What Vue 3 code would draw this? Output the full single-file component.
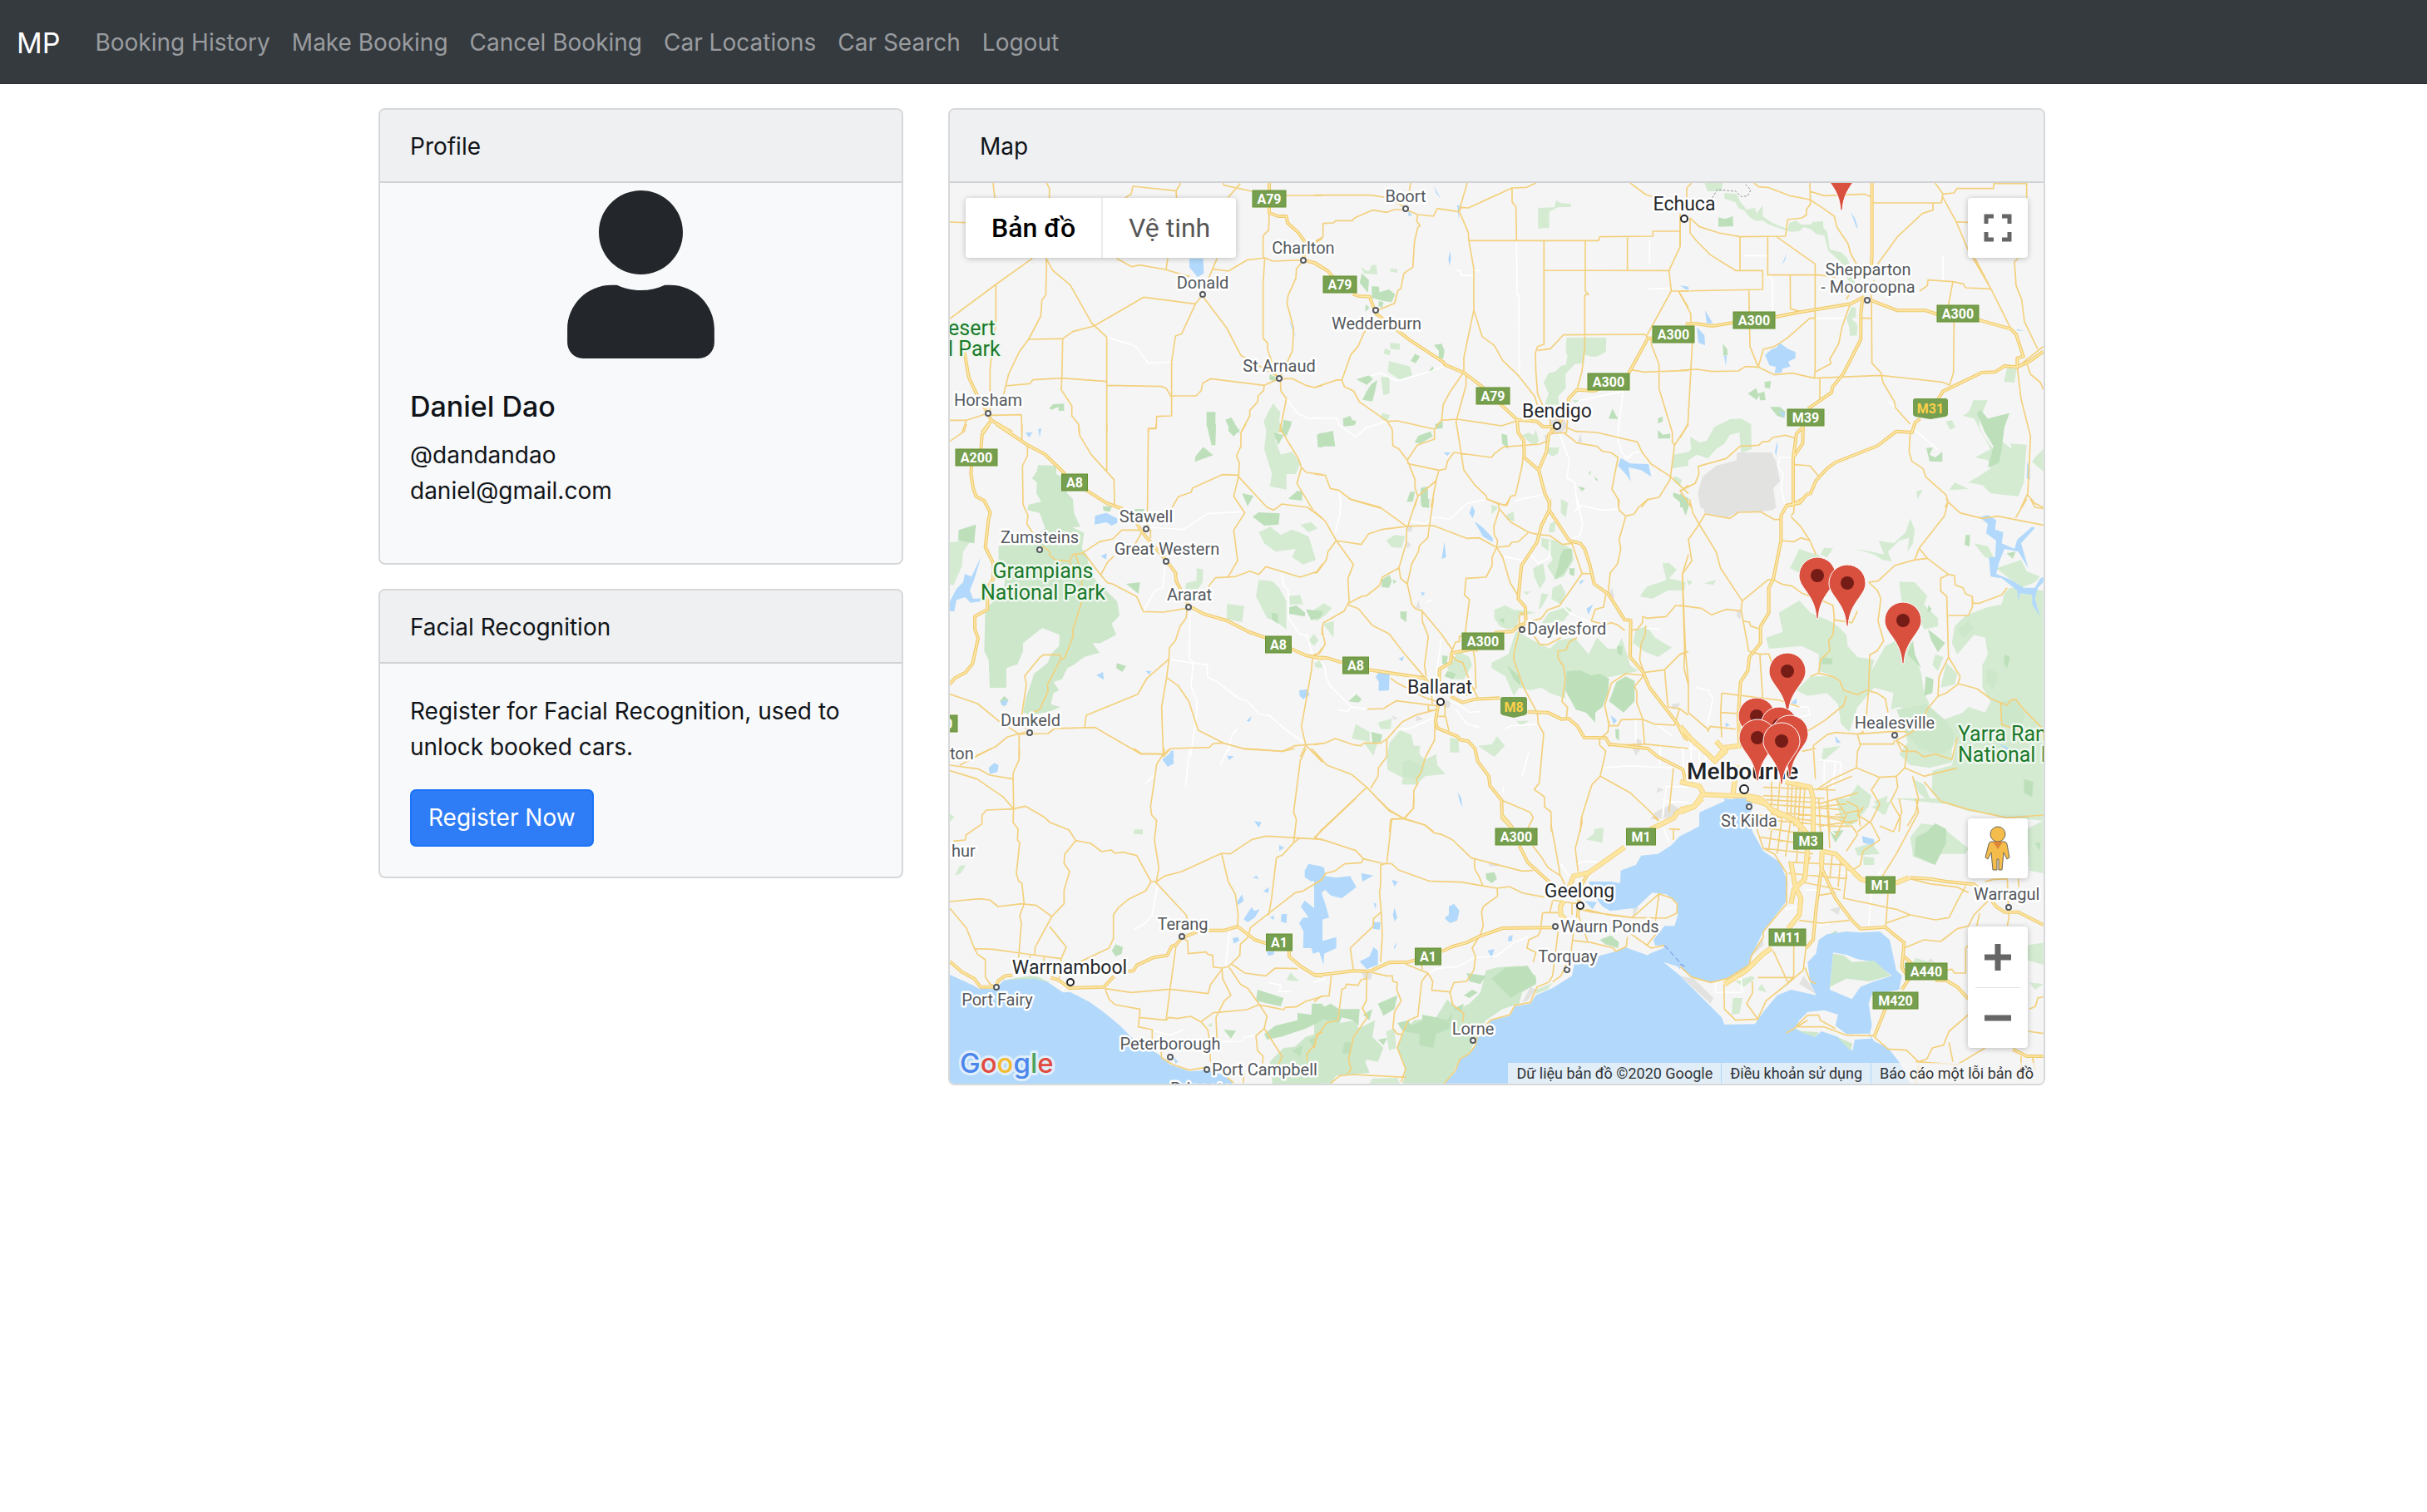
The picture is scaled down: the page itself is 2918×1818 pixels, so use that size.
<script setup>
const navLinks = ['Booking History', 'Make Booking', 'Cancel Booking', 'Car Locations', 'Car Search', 'Logout']

// The map is drawn from nine tiles. Each tile has its own origin on the map and
// holds its shapes at three times map scale; shapes are separated by "|".
const tiles = [
  {
    x: -12, y: -100,
    light: '1202,1094 1218,1116 1228,1126 1224,1160 1240,1200 1180,1200 1168,1160 1186,1124',
    dark: '395,1112 408,1098 448,1096 448,1122 428,1122 428,1108 402,1118|962,1126 994,1126 994,1200 976,1200 962,1176|1030,1154 1052,1146 1082,1200 1050,1200|1240,1154 1270,1160 1256,1200 1232,1200|1190,990 1222,1006 1206,1018 1188,1008',
    water: '900,572 950,572 952,626 930,640 900,604|356,1186 366,1190 360,1200 356,1200|1258,786 1272,820 1286,860 1268,820',
    white: '602,856 706,888 752,950 836,945|1250,1078 1290,1130 1330,1150 1380,1148',
    minor: '192,300 198,354|385,300 395,320 395,354|36,441 92,443|668,354 690,340 696,312 852,328 866,306 868,300|852,328 854,354|1022,300 1024,308 1126,330|1084,302 1040,352|1248,345 1380,345|36,790 202,666 334,572|202,666 202,800 196,850|186,930 181,970 181,1130|383,572 385,600 382,704 368,722 364,780 320,864 286,910 248,990 230,1062|383,572 408,616 470,668 548,806 602,856 602,1200|638,572 692,602 722,596 812,612 900,638|822,572 816,612|1000,572 984,610 948,690|984,610 1040,618 1108,578 1172,570 1200,582 1312,578|556,816 736,712 920,736|556,816 480,836 443,862 320,864|443,862 440,1006 438,1046 476,1104 476,1140 500,1170 504,1200|235,1032 324,1024 336,1010 438,1004 602,1016|602,1030 802,1034 816,1040 836,1074|946,706 922,736 872,844 850,852 836,945 836,1140 782,1142 780,1186 752,1186 752,1200|946,706 1034,822 1086,922 1222,1000|836,1068 924,1068 942,1050 948,1022 978,1006 1170,1030 1222,1006|1170,1030 1168,1048 1148,1068 1146,1090 1118,1120 1118,1140 1088,1196|1222,1006 1272,1006 1320,1030 1352,1038 1380,1030|1228,1010 1230,1050 1250,1078 1228,1185 1226,1200|1188,408 1186,470 1166,490 1166,570 1172,570 1166,660 1166,860 1182,878 1182,900 1216,1000|1312,578 1286,610 1284,644 1256,706 1252,734 1276,824 1272,904 1238,980 1222,1006|1348,520 1380,500|36,1156 96,1156 164,1134|96,1156 80,1200|180,1138 294,1136 296,1200',
    major: '1188,300 1188,408 1220,420 1250,420 1254,444 1290,476 1318,514 1312,578 1350,588 1380,606|80,860 92,930 104,1000 132,1060 172,1130 186,1156 260,1200|186,1156 152,1200',
  },
  {
    x: 438, y: -10,
    light: '808,120 866,118 874,92 888,102 928,106 926,116 878,118 848,134 848,192 808,194|910,588 1054,588 1052,640 1020,656 1000,656 976,650 974,680 940,684 906,720 908,770 880,800 884,830 830,832 846,790 828,750 846,716 870,710 890,690 908,686 914,652 908,640|274,606 310,610 308,632 274,628|270,672 346,692 354,724 310,740 266,710|750,940 774,930 790,940 800,920 810,960 800,972 780,970|840,984 884,984 880,1006 860,1016 840,1004|256,626 276,636 272,652 250,646|1296,1010 1350,1000 1350,1050 1292,1060|240,730 272,730 272,790 250,796|170,334 190,348 200,346 208,326 224,326 228,360 180,356|274,340 300,340 300,354 276,350|1300,1086 1326,1100 1320,1126 1298,1106|244,860 274,868 262,890 242,880|930,812 962,814 946,828',
    dark: '172,356 198,380 194,426 164,390|208,402 234,404 236,424 270,414 292,432 280,460 250,456 208,444|432,614 460,610 470,634 466,664 448,664 450,636|364,646 382,656 366,680 348,672|152,738 200,724 212,738 190,758|206,756 228,740 220,780 210,818 174,812 190,780|104,880 130,870 138,886 152,888 146,904 106,908|12,936 68,924 76,980 40,980 14,984|376,942 420,926 428,944 384,970 362,966|436,900 464,890 464,914 440,918|676,934 696,940 700,990 678,970|1062,880 1076,844 1096,882|1240,880 1256,872 1258,890 1240,898 1240,920 1258,938 1284,934 1284,952 1240,952|384,1130 410,1124 412,1200 390,1200 384,1160|346,1144 364,1144 356,1180 334,1180|428,690 432,710 410,714|990,1076 998,1066 996,1084|952,1124 978,1130 966,1142|1296,1146 1350,1166 1350,1200 1330,1190 1294,1160|234,456 250,460 246,480 232,474|186,468 200,480 184,494|1012,1088 1026,1104 1014,1102',
    gray: '850,884 900,880 914,910 890,934 860,930|962,934 966,966 950,966|830,940 850,936 836,980',
    water: '1106,1022 1140,1042 1206,1044 1216,1090 1180,1066 1134,1056 1142,1106 1124,1080 1096,1050|466,1002 492,1002 480,1014|516,110 524,110 522,164|340,130 354,146 340,150|490,276 494,300 488,330 484,304|432,40 456,86 440,66|1320,400 1350,404 1350,416',
    white: '730,240 732,434 738,434 740,720|514,346 528,346 530,364 578,364|576,346 600,346|0,878 84,878 90,904 150,946 186,914 260,890|884,930 920,1028 912,1094 940,1110 950,1200|916,850 960,814 1114,782 1094,950 1108,1000|200,726 240,716 300,744 420,710 470,690|1210,236 1210,320|1204,412 1286,410|90,1140 96,1200|724,1176 826,1154|1108,1000 1130,1024 1150,1004 1180,998',
    minor: '0,74 205,74 270,84 330,120|348,30 342,64|6,240 32,224 32,176 70,174 78,166 138,166 146,156 210,128 262,136 290,126 330,126 374,144 430,150 444,122 522,134 552,30|374,144 370,168 382,184 374,190 362,240 356,334 324,356 312,412 302,418 290,464 222,492|522,134 530,118 556,120 714,48 766,46 800,30|524,134 556,208 558,238 576,340 576,488 540,660 540,712|558,238 1026,238 1030,224 1222,222 1222,204 1320,204|714,48 714,98 728,116 730,238|829,238 829,612 806,620 798,644 800,714 806,790 824,832|829,345 1280,346|978,238 978,420 990,432 976,434 976,620 966,710 948,776|1130,224 1130,345|1140,30 1196,72 1260,90|1320,140 1320,260 1280,346 1288,420 1200,580|1288,420 1350,420|1314,420 1350,480|806,634 852,628 890,588 898,578 1192,576 1204,588|576,488 606,584 650,616 680,670 736,724 796,800 806,834|210,530 180,570 158,620 132,650 100,742 110,766 142,780 164,820 264,890 282,920 284,978 306,990 336,1030 364,1100 364,1130 374,1160 362,1200|0,768 84,740 100,742|264,890 300,888 434,918 434,954 372,976 336,1030|540,712 490,784 466,828 460,884 434,918|548,720 548,760 512,890 540,1066 580,1120 622,1160 622,1170 690,1194 710,1160 726,1156 750,1050 756,1000|460,886 516,882 676,906 732,888|336,1042 450,1066 474,1062 482,1032 504,1002 640,1020 650,1006 684,982 814,972 850,956|450,1066 440,1104 374,1160|440,1104 422,1200|0,1080 40,1084 58,1132 88,1138 130,1170 240,1200|906,910 944,926 1020,930 1166,964 1182,1000 1216,1044 1284,1088 1350,1150|900,930 948,968 1020,980 1040,998 1070,1002 1096,1020 1074,1134 1100,1176 1098,1200|1216,590 1216,612 1244,684 1244,772 1292,930 1292,964 1300,976 1284,1100 1244,1164 1204,1172 1180,1200|1144,704 1190,712 1350,706|1300,976 1350,900|1324,1140 1350,1120|850,880 914,880 910,930 856,934 850,880',
    major: '0,316 50,348 68,370|140,430 160,438 200,440 222,500 344,596 466,676 472,686 540,714 600,760 732,884 804,890 826,910 876,908|732,884 736,930 756,960 758,1020 810,1066 832,1150 850,1186 848,1200|810,1066 838,1000 846,938 876,908 916,850 918,808 948,776 1010,780 1030,772|1134,718 1204,590 1226,590',
  },
  {
    x: 878, y: -100,
    light: '88,300 154,300 150,330 100,330|160,336 204,340 216,366 240,396 270,390 276,410 298,380 298,420 326,440 360,456 388,466 394,444 418,436 436,450 470,450 480,440 516,438 516,460 530,476 540,540 580,550 600,568 616,600 640,700 600,640 580,586 534,544 520,490 490,484 470,466 446,460 430,474 400,476 380,470 320,450 300,436 270,436 248,420 232,400 210,390 200,370 160,356|618,746 634,750 634,784 618,790 640,810 638,850 612,852 610,820 600,790|1058,1084 1110,1084 1080,1150 1080,1180 1100,1220 1130,1260 1160,1230 1196,1260 1192,1240 1250,1244 1240,1380 1220,1430 1120,1420 1090,1390 1040,1380 1080,1356 1120,1330 1110,1300 1064,1290 1120,1260 1060,1150 1020,1140 1042,1124|958,1160 980,1156 994,1180 974,1190|990,1380 1040,1404 970,1408|1280,1290 1310,1260 1310,1340 1270,1306|852,1412 876,1406 856,1440|1180,964 1214,968 1206,1020 1168,1018|36,1216 70,1236 96,1230 124,1180 180,1152 220,1150 256,1170 258,1260 220,1274 214,1200 180,1208 160,1240 130,1260 100,1294 60,1280 0,1320 0,1300 40,1260',
    dark: '138,424 162,430 190,420 192,456 138,458|244,1060 274,1040 282,1060 304,1052 308,1084 288,1084 286,1066 276,1082|304,1018 328,1014 324,1042 306,1038|324,1108 360,1108 380,1124 376,1148 350,1140|154,880 170,900 172,922 156,922|1070,1130 1084,1118 1110,1150 1188,1130 1170,1180 1160,1260 1150,1310 1110,1326 1130,1250 1100,1200|888,1256 912,1254 900,1280 920,1290 946,1270 946,1306 900,1304|0,1420 30,1444 30,1470 0,1470',
    gray: '204,1272 330,1272 348,1310 360,1376 336,1400 346,1474 74,1474 64,1420 80,1360 130,1320 204,1300',
    water: '306,920 330,900 348,894 358,876 388,898 416,910 416,932 390,944 398,962 370,970 366,984 340,986 346,964 322,958|60,820 88,850 90,886 66,876|90,760 118,806 96,806|356,1120 378,1130 374,1148|0,670 34,684 20,684|616,404 632,430 642,466 634,456|384,552 378,580 368,594|350,1232 352,1250 346,1284 342,1270|1252,1304 1262,1330 1262,1370 1250,1366|158,922 168,924 165,960|1210,828 1240,832 1220,834',
    white: '230,562 316,562|316,630 334,650 334,770|490,788 594,788|948,562 948,650|408,1290 360,1290 352,1320 372,1350 364,1400 378,1460|750,1086 776,1110|836,1180 880,1220 930,1262',
    dashed: '116,354 134,324 200,330 222,350 244,346 255,325 235,304',
    minor: '42,300 24,318 24,360|0,420 0,530|36,426 36,480 60,510 110,560 200,616 298,616 298,684 0,690|36,426 70,458 140,480 216,494 380,492 388,432 440,426 456,414 456,396 470,376 468,300|266,300 284,314 316,316 396,346 468,360 520,394 556,420 566,460 606,520 614,552 640,600 660,650|468,330 520,346 664,340 690,350|696,372 942,372 948,340 920,300|912,374 912,398 874,410 784,494 700,610|948,340 988,336 998,320 1130,320 1132,302 1250,302 1250,354|948,352 996,440 1038,540 1120,680 1190,820|996,440 1038,442|1064,572 1120,680|1220,572 1206,584 1212,670 1232,720 1242,800 1290,900|216,494 216,616|316,494 316,632 500,632 560,640|348,494 487,592 487,980 484,1004|397,634 398,754 430,762|690,690 692,950 724,984 732,1020 774,1090 776,1110 830,1170|864,690 892,670 894,650 984,656 1022,664 1030,678 1120,682|984,656 968,740|988,800 986,984 972,1030|0,700 38,770 44,880 28,1170 0,1220|248,686 252,890 282,964|0,976 60,972 116,980 210,978 236,962 282,964 340,992 404,986 484,1004 724,994 944,1018 974,1030|282,964 300,900 340,890 386,860 468,788 486,788|612,740 584,820 572,880 540,936 544,952 490,980|504,1004 504,1080|655,788 690,788|412,1220 380,1210 334,1218 320,1232 296,1234 284,1246 216,1250 166,1294 66,1322 68,1350 54,1384 0,1410 20,1440 40,1470|412,1316 468,1320 500,1358|830,1200 826,1270 836,1304 876,1330 886,1360 960,1426 966,1450 956,1470|1216,964 1230,1080 1264,1214 1254,1420 1230,1470|1254,1426 1280,1456 1310,1470|1216,964 1310,890|1250,950 1264,990 1300,1020 1310,1044|700,650 690,690|616,690 600,720',
    major: '692,300 692,560 690,600|20,808 60,808 116,816 192,804|342,784 420,768 616,736 664,710|690,724 784,760 886,760 930,774|1076,794 1192,826 1212,846 1238,926 1216,932 1216,964|1310,908 1260,944 1216,964 1170,960 1136,982 1088,984 948,1052 930,1080|866,1150 848,1164 836,1200 780,1196 712,1248 560,1308 530,1330 490,1374 470,1420 456,1424 432,1454 380,1464|658,720 652,770 652,864 590,986 550,1036 546,1056 462,1114|444,1178 442,1240 408,1290 408,1470|444,1180 420,1204 408,1290',
  },
  {
    x: -12, y: 290,
    park: '354,148 420,150 420,180 440,190 460,250 480,270 484,320 506,370 478,372 520,392 512,450 530,470 540,530 560,560 600,600 640,640 648,690 620,720 636,760 580,790 550,790 576,824 520,840 480,870 460,880 440,920 410,930 430,960 410,970 400,1010 434,1020 400,1036 330,1050 300,1040 310,990 340,900 390,860 400,830 430,800 432,760 370,736 350,750 300,790 300,820 280,866 240,880 240,950 180,952 176,850 160,820 164,670 230,600 240,520 212,500 212,440 330,410 380,376 360,320 316,310 320,290 366,280 348,250 350,210 332,196 350,170',
    light: '1180,0 1228,0 1210,60 1230,110 1270,100 1300,140 1284,180 1250,180 1250,236 1190,224 1198,180 1170,90|36,426 112,420 84,460 80,510 50,580 36,580|1150,390 1192,370 1230,400 1270,380 1330,404 1356,490 1310,506 1270,480 1284,450 1210,460 1170,430|1150,562 1200,566 1224,590 1250,640 1250,740 1210,710 1180,700 1140,620|1036,648 1098,656 1090,714 1034,704|926,520 950,524 948,570 930,596 886,594 888,574 926,564|1260,620 1300,616 1310,650 1262,650|1300,362 1340,354 1362,376 1330,390|1330,780 1350,756 1366,780 1350,800|1350,874 1366,852 1380,860 1380,880',
    dark: '68,382 130,362 124,430 66,420|922,116 950,82 986,112 920,136|1090,250 1132,258 1110,296|1128,334 1150,318 1226,322 1222,362 1170,366|1256,270 1290,240 1308,244 1306,276|962,0 996,0 994,76 980,76|1044,0 1082,20 1060,44 1040,24|1204,30 1240,40 1220,76|1240,0 1268,0 1250,44 1232,30|672,576 722,570 716,612|1196,680 1220,684 1220,720 1198,706|1260,660 1286,654 1318,680 1316,694 1260,684|1320,668 1380,674 1380,690 1340,708|638,862 672,872 658,894 636,880|588,296 620,296 614,316 590,312|702,306 738,306 736,316 704,316|1360,40 1380,30 1380,84 1364,80|216,1000 232,980 248,996 232,1020',
    water: '36,640 60,594 84,570 90,540 114,550 148,480 124,560 108,600 120,630 148,628 146,640 110,644 92,624 60,634 52,676 36,674|560,330 600,320 640,340 640,356 620,366 600,354 558,362|308,30 334,30 322,48|580,476 602,466 600,488|564,906 588,894 592,922|1296,960 1324,956 1334,976 1310,992 1298,980|220,1000 246,994 240,1014 222,1014|356,20 366,14 360,50|1106,1070 1124,1054 1118,1074|742,890 762,890 756,904|832,1180 842,1176 844,1200 828,1200',
    white: '750,372 878,380 934,344 968,322 1090,316|812,510 804,590 776,600 734,676|902,680 900,846 914,860 906,944 928,1000 926,1050 904,1200|832,850 964,868 966,912 1000,930 1080,990 1110,1000 1150,1044 1190,1052 1250,1104 1310,1146|1232,540 1240,580 1256,600 1258,700 1296,756 1326,764 1344,836|1072,1100 1054,1120 1040,1180',
    minor: '96,0 88,26 36,62|296,0 296,60 316,76 316,114 298,150 300,290 318,330 314,360 340,400|500,0 504,40 546,110 628,200 630,290|602,0 602,168|782,0 780,14 752,16 748,380|1104,0 1086,30 1086,80 1070,114 1080,140 1078,186 1060,260 1100,320 1060,382 1074,492 1040,550|1078,184 1018,182 912,230 906,246 860,262 838,300|1078,190 1180,300 1204,310 1234,288 1326,300 1380,340|1228,0 1230,20 1294,126 1304,156 1288,214 1346,310|1304,156 1322,174 1380,182|512,466 576,424 624,414 656,382 730,382|748,380 760,382 760,412|726,394 700,440|512,466 524,470 580,544 604,572 622,576 710,622 734,676 808,678 890,664|628,476 606,496 580,544|370,440 394,458 398,474 418,490 468,494 480,470 512,466|468,494 484,530 500,560|490,470 512,540 512,640 480,740 480,766 450,844 434,850 388,940 390,964 360,1030 336,1040|434,832 374,832 362,840 306,908 312,940 296,1046 312,1100|434,832 436,850|968,586 994,554 1066,550 1118,530 1150,542 1176,514 1300,552 1360,532 1380,504|892,668 888,700 866,730 850,780 828,806 826,850 818,914 800,1020 806,1200|826,848 746,918 714,974 528,1050 522,1096|818,914 860,944 898,1000 932,1104 1022,1150 1100,1172 1236,1180 1280,1160 1380,1152|36,974 136,1008 214,1072 286,1118 390,1116 414,1098 560,1094 726,1190 806,1190|310,1110 244,1128 200,1164 130,1196|286,1118 286,1200|806,1200 832,1170 972,1166 986,1152 1022,1150|1344,846 1340,890 1324,980 1304,1090 1320,1158 1300,1200|1320,1158 1380,1220|1344,836 1366,826 1380,806|1380,730 1378,760',
    major: '204,0 314,74 378,108 452,180|528,238 600,284 660,306 710,356 730,390 820,496 850,536 852,564 898,656 956,686 1034,708 1116,750 1180,772|1266,810 1320,834 1380,846|178,0 152,38 148,94|114,150 112,178 120,230 130,260 160,276 182,320 176,340 164,444 192,500 192,560 172,590 172,668 126,694 126,740 138,772 118,864 92,896 54,916 36,938',
  },
  {
    x: 438, y: 380,
    park: '320,950 350,940 400,970 380,1010 316,1000',
    light: '640,590 700,560 728,476 790,510 850,540 880,510 940,500 990,560 1020,500 1060,540 1090,540 1110,500 1140,600 1170,620 1080,640 1000,650 930,620 910,620 906,720 850,700 820,680 780,690 740,680 720,710 690,640 640,610|650,400 690,384 720,400 770,404 800,410 740,420 730,460 700,470 670,460 650,430|846,410 910,390 930,400 900,440 820,450|820,340 846,344 820,390 810,400|860,320 890,306 908,340 890,380 856,360|790,250 826,232 836,290 814,324 794,280|820,140 870,150 900,164 930,180 936,220 900,280 870,290 840,240 860,220 850,190 820,170|1160,470 1200,460 1230,500 1290,536 1240,570 1190,550 1150,520|1174,352 1200,316 1260,296 1270,290 1256,232 1280,230 1308,256 1280,286 1340,300 1336,330 1276,330 1220,360|272,880 310,834 350,850 360,890 382,890 380,920 400,940 440,920 444,960 474,992 400,1000 370,1030 316,1030 320,1006 264,976 262,930|150,812 200,840 200,876 136,864|180,880 230,876 214,926|230,806 280,792 276,830 240,830|590,890 640,886 660,856 688,890 650,930|490,860 520,866 524,914 490,914|520,550 560,570 570,600 540,650 500,650 480,610|260,150 290,130 328,134 316,176 280,174|850,90 870,80 868,120 846,120|890,0 916,14 908,66 890,50|690,60 720,44 722,80 696,76|640,20 664,30 640,56|0,400 36,376 64,394 40,420 10,440 0,436|32,450 72,440 70,500|730,800 776,800 744,818|0,590 32,590 12,612|754,334 782,334 766,346',
    dark: '910,620 960,618 1000,636 1030,630 1064,648 1060,700 1040,750 1014,770 1014,806 980,770 944,760 906,690|1090,660 1124,640 1156,656 1156,730 1116,770 1064,730|886,210 900,180 930,180 930,220 900,270 866,290 880,240|920,250 940,250 938,278 922,272|244,290 272,274 280,296 270,320 244,318|310,406 334,406 332,444 312,430|696,600 740,640 746,676 720,650|206,840 246,850 240,876 210,880|124,730 152,704 172,722 160,734|384,0 416,0 414,34 386,24|462,564 482,566 478,600 462,594|480,620 512,630 500,650 470,640|1086,830 1100,830 1100,872 1088,862|284,290 298,298 286,306|666,436 686,430 684,450|0,410 30,410 20,430 0,430|1092,530 1112,530 1110,566 1094,556',
    gray: '336,90 356,100 350,120 336,116|334,150 350,166 334,180|376,366 384,396 366,394|1074,320 1084,356 1060,350|1160,864 1180,870 1180,900 1160,926 1150,900|280,780 302,792 286,796|370,780 394,794 366,802|466,724 494,730 488,752 470,756|1290,740 1320,736 1310,760 1290,756|1240,1040 1262,1050 1234,1060|1230,1130 1290,1100 1320,1120 1280,1150 1212,1156',
    water: '560,50 570,24 580,44 572,70|578,80 610,104 644,140 644,156 608,134|470,154 476,210 460,216|222,642 232,626 272,630 270,690 232,692 234,660|958,296 976,290 960,310|982,396 1006,380 990,418|384,336 400,338 392,350|304,576 324,568 318,586|518,1058 530,1076 536,1112 524,1090|1070,780 1092,798 1080,814',
    white: '96,0 92,60 76,120|0,576 20,580 40,610 42,640 60,676 134,750 120,766 84,760|134,750 190,758|430,66 490,72 550,16 624,0|322,98 350,80 400,90 430,66|458,506 430,720|490,730 520,740 560,770 600,766|510,760 550,810 596,824|296,832 350,826 430,790|688,828 710,818 806,812|936,46 964,24 1040,40 1096,36|950,0 968,90 960,130 930,144|684,208 760,222|780,200 810,232 850,210 850,150|900,390 920,410 1000,446|1038,970 1140,962 1204,966 1340,970|1160,796 1160,890|1250,886 1246,960|774,916 750,1000|1240,816 1290,854|1196,466 1246,470|1256,1150 1270,1036 1350,1040|1260,1090 1350,1094|400,376 428,362|684,1036 680,1060|1330,900 1334,980',
    minor: '0,44 40,80 80,150 142,236 122,286 126,370 120,382 108,404 34,446 28,470 40,524 20,556 0,562|80,150 170,164 196,126 244,110 340,98 430,96 550,142 596,140 624,156 658,174 702,170 714,156 736,154 774,120 806,128 850,132 896,164 930,160|80,150 50,190 44,220 10,266 0,266|126,0 244,34 332,98|370,0 350,60 334,110 332,160 306,248 312,286 336,306 352,380 366,396 390,404 458,486 500,546|430,0 416,96 410,140 380,168 376,190 352,234 336,306|306,248 246,282 236,312 190,348 170,352 120,378|120,380 160,396 210,456 270,486 324,556 404,650|390,404 390,440 412,496 398,600 404,640|624,0 664,18 696,22 704,0|664,18 668,36 648,100 650,130 662,150 658,174 642,210 642,240 620,282 548,286 542,346 560,362 544,490|668,36 710,84 774,120|658,174 680,210 706,300 736,350|930,160 966,268 996,270|966,270 884,386 842,400 820,430 768,446|1096,0 1100,40 1124,62 1100,146 1106,180 1094,234 1068,266 1060,340|1124,62 1154,54 1170,30 1204,0|1052,344 1044,390 1014,398 1000,440 1050,454 1070,446 1094,454 1120,474|1140,474 1166,470 1184,446 1186,424 1200,430 1270,424 1304,384 1350,388|1196,456 1194,490 1180,520 1174,580 1190,626|1350,200 1328,272 1336,540 1334,610 1350,672|1350,550 1320,560 1264,616 1190,626|1264,616 1276,750|790,490 814,524 842,526 890,500|948,500 920,516 908,546 880,548 880,574 900,604 906,650 894,730 914,752 910,790|744,460 720,560 720,580 756,680 802,766 806,780 808,810 828,846 812,1024 794,1048 830,1074 832,1112 854,1128 856,1200|496,550 510,516 524,514 524,496 546,490|500,568 516,584 536,590 562,660 590,716|574,548 580,580 584,680 548,710|192,758 250,756 296,728 410,742 448,746|276,646 300,664 400,716 440,730|0,886 40,880 76,864 140,886 168,890 180,880 240,880 262,866 318,804 370,778 440,760|262,866 262,930 232,970 230,1000 204,1044|436,800 434,870 402,930 384,990 368,1010 374,1026 360,1050 358,1116 324,1152 272,1126 190,1040 136,994 46,960 0,910|190,1040 20,1200|272,1200 276,1156 324,1152 400,1176 430,1200|448,784 472,784 472,740|474,784 486,836|412,740 412,762 440,762|424,700 426,740|676,1086 780,1130 790,1150 770,1190|1064,800 1060,840 1030,866 1030,888 1052,910 1032,1000 1002,1030 964,1150 960,1200|1032,1000 1140,1060 1200,1116 1244,1160|1190,636 1156,676 1164,694 1164,736 1184,790 1192,884|1190,636 1124,630 1072,664 1048,744 1064,818 1096,818 1108,796 1184,794 1228,812 1300,816 1318,756 1276,750|1318,756 1350,780|1060,890 1192,884 1350,900|1296,970 1280,1130|740,410 760,414 740,420 740,450',
    major: '848,0 848,40 820,96 804,156 748,240 736,360 762,390 764,448 740,456 714,478 650,482|848,40 920,150 960,160 976,180 994,236 1010,306 1062,344 1120,436 1142,438 1140,570 1186,624 1210,680 1310,810 1336,860 1350,870|590,548 580,540 496,556 492,590 452,614 450,700|0,570 50,574 100,590|196,616 398,646 440,700|492,712 536,734 580,722 670,718|770,768 842,770 892,794 918,792 950,820 974,860 1052,862 1064,884 1204,900 1240,930 1330,976 1340,1020 1350,1026|448,740 438,800 444,826 516,856 526,868 556,874 580,900 590,946 630,1000 634,1034 676,1086 678,1150 716,1190',
    wide: '1212,1192 1270,1164 1298,1150 1310,1130 1350,1112',
  },
  {
    x: 878, y: 380,
    light: '430,180 470,194 500,200 520,250 440,270 396,250|520,176 552,178 530,210 506,200|830,70 846,110 840,160 820,190 826,140 790,150 750,190 764,226 730,220 700,200 630,180 690,190 736,200 716,150 770,160 814,120|310,500 370,480 356,410 430,366 470,410 540,440 570,460 600,490 604,530 640,570 700,580 690,620 740,530 800,500 840,520 850,570 870,630 880,700 900,740 870,780 790,750 760,760 770,700 700,680 640,750 610,840 580,810 570,740 530,700 460,710 420,690 470,640 560,640 500,620 500,560 440,530 320,540|790,298 846,300 892,350 880,380 930,430 930,460 880,470 860,430 800,380|1110,390 1160,380 1170,340 1190,320 1310,330 1310,1150 1040,1120 940,1090 908,1060 910,980 980,960 1000,870 960,830 940,800 1020,770 1040,750 1100,770 1120,730 1090,680 1090,600 1110,560 1100,500 1060,490 1000,560 980,520 990,460 1030,420|960,590 1000,630 990,670 940,680|800,780 900,760 960,830 1000,860 980,900 980,950 900,970 830,960 790,920 820,880|1140,250 1230,220 1250,260 1298,280 1280,300 1230,320|1060,160 1110,170 1136,220 1100,210|594,1100 640,1030 690,1070 680,1110 630,1170 600,1180 570,1150|516,900 580,890 510,950|700,1090 750,1070 730,1140|840,1010 880,1030 910,1100 860,1060|920,560 950,570 930,620 910,600|24,290 46,300 30,312|86,304 130,292 120,310',
    park: '780,760 890,740 960,800 990,850 980,900 940,920 860,900 820,850|1160,730 1210,720 1244,780 1230,830 1160,814|1000,470 1040,440 1060,470 1020,500|1110,610 1150,630 1130,690 1100,660',
    dark: '894,470 920,490 956,520 930,552 906,510|886,640 914,650 910,700 880,710|514,570 550,576 548,596 508,596|896,382 908,398 892,410|820,560 840,510 846,560 870,610|1030,130 1046,130 1044,170 1026,166|1178,196 1210,190 1200,216|1240,1010 1274,1020 1270,1076 1240,1060|0,0 26,0 30,30 20,60 10,34|1170,560 1190,570 1180,610 1168,596',
    gray: '74,0 344,0 336,40 290,46 210,46 170,68 90,54|206,400 220,404 218,434 204,424',
    water: '1080,66 1110,58 1140,76 1136,110 1166,120 1160,160 1206,180 1216,146 1270,100 1280,104 1230,160 1256,250 1220,190 1170,180 1150,230 1140,270 1190,290 1240,320 1280,320 1296,290 1310,280 1310,300 1290,320 1280,360 1298,424 1270,380 1270,346 1226,340 1220,370 1216,330 1160,286 1120,280 1114,210 1136,210 1140,150 1104,124 1110,90|558,854 580,880 564,880|400,736 420,720 420,740|164,806 180,816 164,822|1146,880 1190,900 1180,906|68,1204 70,1140 120,1110 170,1116 158,1080 200,1086 240,1110 262,1204',
    white: '56,680 100,690 118,720 100,810|400,750 460,750 470,780 400,790|0,900 70,900 70,1000|40,880 40,980|90,920 100,1000|500,940 580,950 580,1020|520,940 520,1040|560,950 550,1040',
    minor: '34,0 46,50 68,90 130,190 146,250 224,368 220,400 248,550|68,92 30,146 42,224 8,270 20,560 30,660 30,770|68,92 90,54 180,70 210,48 290,46 340,74 364,74|400,60 410,50 412,0|400,64 436,100 468,150 490,200|364,150 410,154 436,140 468,150|224,368 316,292 334,290 370,308 404,314 440,340 520,370 552,384 556,430 552,490 536,510 540,548 506,580 500,628 470,640|0,384 76,394 114,418 166,398 222,404|0,560 20,552|224,440 250,444 254,458 284,468|250,550 288,560 320,558 330,590|288,560 290,600 298,720|556,436 620,446 640,404|680,300 714,296 774,240 844,220 892,214 968,272 990,276 992,310 1020,320 1030,342 1054,352 1056,376 1080,376 1160,346 1180,320|680,300 712,330 724,360 714,440 734,512 710,548 684,562 680,690 672,780|1250,0 1210,68|862,178 954,60 966,10 1010,50 1090,70 1146,62 1310,94|966,10 960,0|862,178 846,220|862,178 892,214|1264,0 1280,30 1310,34|968,272 940,286 940,332 962,352 968,570 934,640 930,710|968,420 1040,420 1054,390 1054,352|968,570 1010,640 1002,668 960,700 930,712|1002,666 1070,684 1120,720 1180,744 1190,728 1210,722 1240,760 1310,830|1156,736 1160,814 1220,832 1240,880 1310,850|930,712 890,760 870,820 820,850 780,870|500,628 550,640 576,656 590,690 640,706 672,690 710,700 740,720 750,770|600,710 590,744 520,800 440,850|672,780 660,840 640,850|480,890 530,850 560,842 640,848 770,838 820,840|640,850 650,888 640,910 636,970|650,884 770,884 774,870|780,870 800,910 850,910 880,930 920,920 980,940 1000,860|780,870 820,900 810,970 780,1000 720,1004 636,970|780,1000 785,1040 760,1090 795,1150 790,1200|810,970 880,1000 1000,970|720,1004 690,1050 720,1100 690,1160 640,1200|838,1000 860,1080 850,1130 820,1180|636,970 550,1010 490,1050|880,1020 940,1090 1040,1120 1180,1150 1310,1140|100,840 108,820 200,830|150,700 146,780 150,860|150,700 360,726 430,750|146,770 240,776|30,770 104,834|490,900 440,910|480,890 488,1010|300,1040 560,1050|300,1070 520,1080|300,1100 580,1120|330,1130 600,1150|340,1160 520,1176|330,1020 330,1140|360,1020 350,1150|390,1020 385,1160|420,1030 410,1180|450,1040 440,1200|500,1050 620,1000|500,1100 640,1060|500,1180 640,1160|530,1040 540,1200|600,1090 640,1110 650,1180|405,1020 398,1160|435,1030 425,1180|310,1085 500,1095',
    major: '442,0 410,18 384,24 364,60 364,150 336,290 320,320 320,410 290,460 290,520 250,570 244,620 218,660 210,780 214,900',
    wide: '0,820 40,866 100,920 130,950|130,874 164,910 120,950|120,950 164,896 215,890|0,1020 70,1036 86,1066 180,1070 240,1070 290,1080 330,1120 400,1150 450,1200|0,1120 50,1110 80,1066|190,1070 204,960|380,1020 470,1040 480,1080 480,1200',
  },
  {
    x: -12, y: 680,
    park: '1380,1020 1380,1210 1200,1210 1190,1130 1240,1080 1280,1076 1320,1040',
    light: '36,234 52,248 36,264|54,460 72,422 94,420 76,450|700,292 732,292 732,310 700,308|1250,836 1264,808 1296,840|964,1000 980,990 984,1004',
    dark: '1146,870 1240,900 1230,930 1140,910|1024,1014 1068,1018 1050,1046|1170,1030 1210,1000 1290,980 1290,954 1340,960 1342,920 1380,920 1380,980 1320,1010 1230,1040 1180,1050|620,730 634,706 660,716 656,740 634,750|1270,1090 1310,1070 1300,1110|1330,1050 1360,1040 1350,1080',
    water: '36,816 120,854 140,866 200,868 230,836 340,824 360,826 400,850 444,880 470,878 540,914 590,950 650,1000 700,1050 790,1104 830,1140 900,1164 970,1160 1030,1180 1060,1210 36,1210|176,70 196,52 212,60 208,84 180,92|802,40 840,8 844,54 822,66|1316,440 1330,416 1380,426 1380,470 1340,480 1316,464|1296,630 1310,610 1330,610 1302,570 1316,548 1380,600 1380,730 1346,740 1340,720 1310,720 1312,660|1096,616 1124,572 1134,586 1154,580 1136,610 1110,626|1072,552 1090,526 1096,550 1076,564|1232,598 1252,596 1250,630 1230,624|1056,684 1076,680 1080,692 1060,704|1134,262 1160,266 1150,286|1224,348 1242,358 1224,370|1036,26 1060,28 1044,42|1130,466 1142,458 1150,472|1166,514 1188,500 1184,522|1190,610 1206,602 1204,618|1180,732 1206,730 1204,744 1184,748|1360,540 1376,490 1380,550|840,1110 860,1130 850,1136',
    isleGreen: '220,836 330,820 350,822 400,846 340,830 240,834',
    white: '1186,844 1230,854 1224,876 1266,878|774,1018 830,1034 880,1014|786,490 766,600 740,630 700,654|776,92 740,128|900,0 886,140|1046,654 1030,786|1040,0 1012,60|1000,1058 1090,1056 1100,1040 1140,1036|430,850 456,860 440,870',
    minor: '36,60 140,74 180,96 264,110|72,60 186,0|36,80 134,110 230,176 264,216|286,0 286,40 264,90 266,216|48,334 92,330 94,312 152,272 152,240 168,222 264,218 308,208 378,248 396,266 466,294 490,332 544,342 584,372 618,366 632,378 660,374 710,386 762,480 782,480 810,460 872,444 1016,378 1048,380 1126,328 1176,316 1380,328|266,216 264,266 282,290 280,330 288,340 276,450 284,478 296,486 304,560 288,604 294,630 284,756|490,332 450,382 448,414 468,444 448,510 448,560 404,606 344,716 342,744|36,552 144,542 180,546 210,570 296,560 348,566 404,606|36,576 96,648 124,720 136,742 164,762 164,824 180,848 200,858|124,722 190,724 290,738 438,758 456,716 396,642|326,746 320,766|376,750 376,800|438,758 430,830|762,480 742,514 680,544 644,574 626,600 626,686 610,720 500,772|810,0 806,20 782,56 776,100 760,210 764,240 782,260 774,330 790,430 780,484 888,600 894,620|700,0 726,18 806,20 832,0|1100,0 1236,10 1280,0|1320,0 1300,44 1276,230 1286,256 1276,340|1340,0 1380,44|1380,290 1350,326|1298,322 1276,340 1236,384 1214,394 1196,544 1186,602|1016,378 1040,480 1066,526 1076,600 1074,640|1380,472 1310,514 1282,520 1120,646 1112,680 1084,706 1082,746 1042,786 1018,792 986,788 984,746 966,742 960,734 896,740 894,696 880,684|852,710 830,870 816,980|596,866 690,880 830,868 968,884 976,852 1018,796|596,866 610,904 632,924 722,940 716,1004 766,1014 766,1050|720,970 816,980 826,970 856,974 904,966 942,986 966,1014 974,1060 976,1130|942,986 988,952 1000,952 1108,942 1150,924 1240,942 1246,934 1284,932 1320,912 1380,894|1050,776 1100,810 1176,820 1210,792 1290,794|1018,796 1020,830 1050,890 1026,910 996,970 1000,1060|1044,790 1084,850 1112,866 1150,920 1180,966 1170,1010 1234,1110 1222,1140|1170,1010 1140,1036 1146,1090 1166,1110 1164,1136|1380,1024 1360,1030 1352,1070 1324,1100 1324,1130|798,1090 800,1116 840,1140 900,1160 960,1150|1098,1170 1094,1208|1030,1180 1060,1206',
    major: '36,768 80,806 124,830 146,860 202,860 210,838 236,820 262,818|400,826 430,836 466,864 592,860 628,822|680,804 698,802 710,782 770,754 820,746 836,714 852,708 872,684 940,656 1026,656 1074,642 1136,690 1180,704|1260,728 1260,750 1302,786 1350,816 1380,820',
  },
  {
    x: 438, y: 740,
    park: '320,850 360,800 440,790 480,726 520,760 560,740 600,700 620,620 660,610 740,604 800,640 800,670 750,700 740,740 680,760 620,800 590,850 560,920 526,940 500,990 470,1028 320,1028 330,980 300,900|0,800 40,790 90,810 150,800 160,830 220,800 210,860 250,900 230,950 180,940 200,990 140,996 80,1000 60,1028 0,1028',
    light: '980,150 1010,126 1010,110 1044,106 1040,160 990,150|800,690 860,666 840,690 800,706|260,840 290,830 296,900 270,910|150,900 190,880 210,930 170,960|210,1010 300,1008 310,1028 200,1028',
    dark: '300,810 340,800 350,820 390,800 390,780 440,790 480,800 500,770 490,830 440,850 430,900 380,890 380,850 320,840|0,740 40,750 60,740 90,760 164,760 160,820 140,800 100,790 90,810 0,790|690,610 770,604 800,650 800,670 740,700 710,720 640,650|620,270 650,266 660,290 640,306 620,290|550,630 620,640 600,670 560,660|230,740 300,710 290,760 250,784|500,760 540,740 530,770|540,710 570,690 590,700 560,720|1030,510 1070,494 1100,520 1096,540 1050,526|176,780 210,760 200,800|230,870 264,864 250,890|110,880 134,880 130,920 100,920',
    gray: '630,234 668,236 660,246 632,244|172,630 210,630 204,654 180,650|780,680 800,690 770,730 750,736|1150,390 1170,394 1150,430',
    water: '1320,134 1290,168 1240,200 1180,206 1160,240 1106,260 1104,306 1070,300 990,300 1010,350 1040,390 1068,406 1130,398 1160,396 1220,340 1270,346 1310,376 1312,420 1300,460 1264,460 1224,510 1230,530 1264,530 1260,540 1210,560 1204,566 1120,536 1080,554 940,590 930,640 860,684 800,710 780,740 724,750 706,784 640,800 590,850 584,890 560,920 526,940 510,986 470,1028 1320,1028|976,370 1020,374 1004,400|0,244 36,250 40,280 80,286 130,280 152,320 100,360 60,350 40,330 26,340 40,380 54,430 20,440 10,520 80,500 80,540 36,560 34,600 0,500|170,270 214,278 174,300|280,294 302,300 290,318|164,588 200,570 214,536 230,550 230,600 190,616|210,446 240,446 236,474 212,470|472,430 486,420 486,390 504,380 524,404 516,440 490,450 474,436|290,394 300,430 290,444 284,420|626,548 650,544 640,578|700,500 716,492 714,514 700,516|214,376 224,380 222,400|300,520 290,546 288,534',
    isle: '1260,590 1310,606 1321,618 1321,640',
    ferry: '1264,530 1330,604',
    white: '410,636 440,614 520,606 580,574 660,568 720,520 770,500|0,664 40,650|888,234 920,280|952,236 980,226 1050,232|1260,60 1262,10 1300,14|1262,110 1280,160',
    minor: '0,142 150,0|228,0 270,40 324,74 358,36 360,0|324,74 280,74 262,234 240,240 240,310 236,340 242,410 214,434 214,460 130,540 142,620|0,142 40,152 150,188 178,218 244,234 280,236 304,258 414,298 530,302 600,314 660,324 704,318 754,342 830,356|0,310 30,290 42,270 74,262 110,236 170,232 178,218|324,74 400,96 432,124 460,130 500,150 566,214 750,262 790,260|578,218 580,256 594,280 608,314|660,324 662,352 610,390 604,410 610,460 600,490 570,540 582,570 576,620 550,660 504,664 490,700 500,744 540,776 536,806|242,410 246,490 240,590|788,170 816,206 844,250 890,280 904,310|870,176 888,280|854,94 870,176|942,180 952,264|966,68 966,90 942,180|1224,66 1240,80|824,412 880,412|824,412 816,480 808,494 774,510 768,540 800,556 790,590|880,480 860,640 846,664|936,480 926,560 890,640 860,662|930,512 1000,520 1080,540 1088,552 1126,534 1130,500|860,370 850,412|950,410 986,514|980,400 1060,420 1150,430 1270,432 1308,414 1310,382 1290,360 1244,344 1170,410 1144,432|1144,490 1216,540 1264,530|1244,344 1230,450 1232,490 1200,530|62,640 54,712 24,714 0,734|190,624 190,650 170,654 158,674 116,670 112,684 100,688 86,800 44,810 10,860 0,900|190,650 188,730 174,756 192,790 142,860 134,900 124,940 134,980 120,990|210,628 260,640 282,640 284,660 300,664 298,690 314,730 290,770 284,830 300,850 318,850 340,800 374,786 388,660 410,630 330,598|410,630 428,660 424,692 490,698|318,850 300,900 330,976 314,1024|60,1028 92,1000 140,996 220,1000 330,1006|470,1028 510,980 526,940 560,920 582,890 590,850 636,800 706,780 724,746 780,736 804,680 844,664|388,596 390,620|960,400 1000,410 1150,430|860,366 890,372 950,380|930,380 930,420|1280,110 1320,112|1296,110 1296,150',
    major: '0,638 60,632 142,622 200,624 270,592 340,590 370,582|460,552 500,534 550,520 600,496 680,468 860,466|678,60 716,106|740,170 770,230 860,312 900,330|990,268 960,320 950,430',
    wide: '1120,176 990,268 936,280 920,320|900,370 888,390 890,420 910,440',
  },
  {
    x: 878, y: 740,
    light: '760,0 1310,0 1310,80 1190,70 1040,46 960,20|830,140 870,90 940,100 1040,180 1030,200 930,200 920,240 840,210|560,0 620,0 640,60 580,70|1250,110 1310,80 1310,270 1260,260|630,180 690,160 720,200 640,206|660,210 700,214 700,240 662,240|1250,530 1310,520 1310,600 1240,580|850,576 900,590 880,640 820,620|690,30 760,10 740,60|190,720 226,720 214,776 186,780|200,660 260,640 270,650 230,680|280,690 294,668 312,700|1260,664 1310,670 1280,690',
    dark: '850,140 890,120 920,90 960,110 960,160 920,240 846,206|1280,160 1300,160 1296,190|540,120 590,114 560,160|540,490 566,476 560,506 540,500',
    gray: '430,670 446,640 490,706|300,500 300,530 256,570 270,540|0,640 50,650 120,720 110,740|540,400 580,390 570,420|890,590 906,576 916,590',
    water: '0,136 70,100 70,50 160,10 200,0 262,0 250,100 300,190 360,230 388,300 384,370 300,480 256,570 240,620 170,650 110,664 40,644 0,610|0,640 60,700 150,790 160,816 270,814 300,770 350,710 400,690 492,710 470,670 460,590 490,560 500,510 530,490 600,480 650,484 720,480 756,510 780,620 800,640 790,690 690,710 680,740 692,820 684,850 700,876 750,900 790,950 830,1028 0,1028|656,136 700,148 700,170 660,160',
    isle: '552,556 600,564 640,580 700,590 764,640 700,660 650,680 620,724 540,690|416,830 430,800 460,770 520,764 570,780 560,820 600,850 680,848 690,866 630,870 622,910 570,860 510,840 486,860',
    isleGreen: '552,560 590,566 620,590 700,586 760,640 680,660 600,650 540,680|566,860 622,884 614,910|420,838 500,844 486,860',
    ferry: '0,598 14,604 14,620',
    white: '690,340 680,460|450,330 510,330|380,400 430,390|400,500 320,530|500,460 540,450|126,700 130,660 220,650 224,700 130,700|440,60 450,120|560,270 620,270|730,250 700,300|520,100 560,130',
    minor: '260,60 300,180 340,200 384,270 384,380 300,480 300,500 256,570 250,600 170,650 110,664 40,644 0,606|830,290 900,308 1000,320 1040,340|600,270 590,360 780,400 830,420 742,450|750,340 742,460|830,420 920,438 970,430 1000,370 1030,316|808,540 880,510 940,516 1000,470 1040,460 1060,420 1110,370|1080,415 1070,460|500,350 560,340|430,440 510,450 610,440|410,530 410,640 390,666 336,550|410,646 280,646|390,666 310,730 280,796 200,800 160,760 158,670|390,666 444,620 454,540|450,610 470,660 490,668|260,660 262,700 240,740 280,796|960,620 980,616 990,630 1030,630 1030,540 1040,530|660,30 640,60 690,90 720,150 660,190 650,240 620,260|790,0 800,50 770,120 720,100|850,0 860,50 780,200 730,280|560,0 600,60 560,140|560,60 660,40|530,100 620,100 640,130 600,190|384,846 460,800|420,824 520,824 600,854 700,856|420,820 460,782 500,782 506,800 560,830|700,860 750,904 816,908 860,950 890,940 910,900 950,890 970,840 1040,780|970,880 984,950|860,960 850,1028|850,950 1000,960 1100,900|1310,716 1290,720 1282,750 1260,760|1256,840 1310,848|1180,290 1186,430 1180,460|1220,290 1222,320|1100,300 1130,292 1180,290|280,60 480,80|270,100 460,130|290,140 420,160|300,180 480,200|390,230 600,240|390,270 600,290|430,300 580,330|340,50 320,180|370,50 350,200|400,70 380,210|430,90 420,230|550,190 540,290|580,210 570,320|500,60 620,90|500,30 600,20|500,0 510,180|530,10 540,180|1230,930 1230,1020|1270,930 1280,980|470,210 440,290|600,240 600,290',
    major: '454,540 480,510 490,400 510,250|510,250 560,360 620,440 650,470 740,464 770,490 808,520 800,610 826,650 800,690|808,570 840,600|920,656 960,656 1000,680 1040,724|740,760 700,860|830,286 900,290 960,300 1060,310 1100,340 1140,390 1170,410 1220,410 1310,456|1200,905 1250,930 1310,930',
    wide: '240,0 310,20 340,50 420,80 460,130|480,0 480,130|460,180 450,290 410,330 400,380|400,230 416,320 436,360 430,420 390,470|510,190 560,200 650,290 680,300|512,190 510,250|330,540 300,560 240,620 160,670|776,306 826,286|0,50 50,30 80,0',
  },
]

const layers = [
  { key: 'light', cls: 'light', close: true },
  { key: 'park', cls: 'park', close: true },
  { key: 'dark', cls: 'dark', close: true },
  { key: 'gray', cls: 'gray', close: true },
  { key: 'water', cls: 'water', close: true },
  { key: 'isle', cls: 'isle', close: true },
  { key: 'isleGreen', cls: 'park', close: true },
  { key: 'white', cls: 'white-road' },
  { key: 'minor', cls: 'minor-road' },
  { key: 'major', cls: 'major-edge' },
  { key: 'wide', cls: 'wide-edge' },
  { key: 'major', cls: 'major-fill' },
  { key: 'wide', cls: 'wide-fill' },
  { key: 'dashed', cls: 'dashed' },
  { key: 'ferry', cls: 'ferry' },
].map((layer) => ({
  cls: layer.cls,
  shapes: tiles
    .filter((t) => t[layer.key])
    .map((t) => ({
      at: `translate(${t.x} ${t.y}) scale(.33333)`,
      d: t[layer.key].split('|').map((p) => 'M' + p + (layer.close ? 'Z' : '')).join(''),
    })),
}))

const shields = [
  ['A79', 384, 19], ['A79', 469, 122], ['A79', 653, 256], ['A300', 792, 239], ['A300', 870, 182],
  ['A300', 967, 165], ['A300', 1212, 157], ['M39', 1029, 282], ['A200', 32, 330], ['A8', 150, 360],
  ['A8', 395, 555], ['A200', -16, 650], ['A8', 488, 580], ['A300', 641, 551], ['A300', 681, 786],
  ['M1', 831, 786], ['A1', 575, 930], ['A1', 396, 913], ['M3', 1032, 791], ['M1', 1119, 844],
  ['M11', 1007, 907], ['A440', 1174, 948], ['M420', 1137, 983],
].map(([name, x, y]) => ({
  name, x, y, w: { 2: name[0] === 'M' ? 35 : 31, 3: name[0] === 'M' ? 44 : 40, 4: name[0] === 'M' ? 54 : 50 }[name.length],
}))

const motorways = [
  { name: 'M31', x: 1179, y: 271, w: 42 },
  { name: 'M8', x: 678, y: 630, w: 32 },
]

const dots = [
  [425, 93], [304, 134], [396, 235], [46, 277], [548, 31], [512, 153], [1103, 141], [236, 416],
  [108, 441], [260, 455], [287, 510], [96, 661], [688, 537], [1136, 664], [961, 750], [56, 967],
  [279, 906], [265, 1051], [309, 1066], [728, 894], [742, 946], [629, 1031], [1273, 871],
]
const cityDots = [[883, 43], [730, 292], [590, 624], [145, 961], [758, 869]]

const places = [
  ['Charlton', 425, 85], ['Donald', 304, 127], ['St Arnaud', 396, 227], ['Horsham', 46, 268],
  ['Boort', 548, 23], ['Wedderburn', 513, 176], ['Shepparton', 1104, 111], ['- Mooroopna', 1104, 132],
  ['Stawell', 236, 408], ['Zumsteins', 108, 433], ['Great Western', 261, 447], ['Ararat', 288, 502],
  ['Dunkeld', 97, 653], ['Healesville', 1136, 656], ['St Kilda', 961, 774], ['Port Fairy', 57, 989],
  ['Terang', 280, 898], ['Peterborough', 265, 1042], ['Torquay', 743, 937], ['Lorne', 629, 1024],
  ['ton', 0, 693, 'start'], ['hur', 2, 810, 'start'], ['Daylesford', 694, 543, 'start'],
  ['Port Campbell', 315, 1073, 'start'], ['Waurn Ponds', 734, 901, 'start'], ['Warragul', 1231, 862, 'start'],
  ['Princetown', 265, 1096, 'start'],
  ['Echuca', 883, 33, 'middle', 'city'], ['Bendigo', 730, 282, 'middle', 'city'],
  ['Ballarat', 589, 614, 'middle', 'city'], ['Warrnambool', 144, 951, 'middle', 'city'],
  ['Geelong', 757, 859, 'middle', 'city'], ['Melbourne', 886, 717, 'start', 'capital'],
  ['Grampians', 112, 475, 'middle', 'reserve'], ['National Park', 112, 501, 'middle', 'reserve'],
  ['esert', -2, 183, 'start', 'reserve'], ['l Park', -2, 208, 'start', 'reserve'],
  ['Yarra Ranges', 1212, 671, 'start', 'reserve'], ['National Park', 1212, 696, 'start', 'reserve'],
].map(([name, x, y, anchor = 'middle', kind = 'town']) => ({ name, x, y, anchor, kind }))

const cars = [
  [1072, 32], [1043, 523], [1079, 532], [1146, 577], [1007, 638],
  [970, 692], [997, 703], [1010, 713], [971, 718], [1000, 722],
]
</script>

<template>
  <div class="page">
    <nav class="navbar">
      <a class="brand" href="#">MP</a>
      <a v-for="link in navLinks" :key="link" class="nav-link" href="#">{{ link }}</a>
    </nav>

    <main class="container">
      <div class="side">
        <section class="card">
          <h2 class="card-header">Profile</h2>
          <svg class="avatar" viewBox="0 0 448 512" aria-hidden="true">
            <path d="M224 256c70.7 0 128-57.3 128-128S294.7 0 224 0 96 57.3 96 128s57.3 128 128 128zm89.6 32h-16.7c-22.2 10.2-46.9 16-72.9 16s-50.6-5.8-72.9-16h-16.7C60.2 288 0 348.2 0 422.4V464c0 26.5 21.5 48 48 48h352c26.5 0 48-21.5 48-48v-41.6c0-74.2-60.2-134.4-134.4-134.4z" />
          </svg>
          <div class="card-body">
            <h3 class="name">Daniel Dao</h3>
            <p class="details">@dandandao<br>daniel@gmail.com</p>
          </div>
        </section>

        <section class="card">
          <h2 class="card-header">Facial Recognition</h2>
          <div class="card-body">
            <p class="note">Register for Facial Recognition, used to unlock booked cars.</p>
            <button class="register" type="button">Register Now</button>
          </div>
        </section>
      </div>

      <section class="card">
        <h2 class="card-header">Map</h2>
        <div class="map">
          <svg class="map-canvas" viewBox="0 0 1315 1083" preserveAspectRatio="xMinYMin slice">
            <g v-for="(layer, i) in layers" :key="i" :class="layer.cls">
              <path v-for="(s, j) in layer.shapes" :key="j" :transform="s.at" :d="s.d" />
            </g>

            <g class="shields">
              <g v-for="(s, i) in shields" :key="i">
                <rect :x="s.x - s.w / 2" :y="s.y - 10" :width="s.w" height="20" />
                <text :x="s.x" :y="s.y + 6">{{ s.name }}</text>
              </g>
            </g>
            <g class="motorways">
              <g v-for="m in motorways" :key="m.name" :transform="`translate(${m.x} ${m.y})`">
                <path :d="`M${-m.w / 2 + 3} -12H${m.w / 2 - 3}q3 0 3 3V7q0 2 -3 3L0 13L${-m.w / 2 + 3} 10q-3 -1 -3 -3V-9q0 -3 3 -3Z`" />
                <text x="0" y="6">{{ m.name }}</text>
              </g>
            </g>

            <g class="dots">
              <circle v-for="(d, i) in dots" :key="i" :cx="d[0]" :cy="d[1]" r="3" />
            </g>
            <g class="city-dots">
              <circle v-for="(d, i) in cityDots" :key="i" :cx="d[0]" :cy="d[1]" r="4" />
              <circle cx="955" cy="729" r="5" />
            </g>
            <text
              v-for="(p, i) in places" :key="i"
              :x="p.x" :y="p.y" :text-anchor="p.anchor" :class="['place', p.kind]"
            >{{ p.name }}</text>

            <g v-for="(c, i) in cars" :key="i" class="marker" :transform="`translate(${c[0]} ${c[1]})`">
              <path d="M-1 1C-2 -12 -5 -20 -12 -30C-19 -40 -22 -44 -22 -51A22 22 0 0 1 22 -51C22 -44 19 -40 12 -30C5 -20 2 -12 1 1Z" />
              <circle cx="0" cy="-51" r="8" />
            </g>

            <text class="logo" x="12" y="1070"><tspan class="blue">G</tspan><tspan class="red">o</tspan><tspan class="yellow">o</tspan><tspan class="blue">g</tspan><tspan class="green">l</tspan><tspan class="red">e</tspan></text>
          </svg>

          <div class="map-types">
            <button class="active" type="button">Bản đồ</button>
            <button type="button">Vệ tinh</button>
          </div>
          <button class="tool fullscreen" type="button" aria-label="Fullscreen">
            <svg viewBox="0 0 34 34" width="34" height="34"><path d="M3 12V3H12M22 3H31V12M31 22V31H22M12 31H3V22" /></svg>
          </button>
          <div class="map-tools">
            <button class="tool" type="button" aria-label="Street View">
              <svg class="pegman" viewBox="0 0 32 56" width="32" height="56">
                <path d="M8 20H24Q26 20 27 23L30 39L27 41L23 33L21 54H17V41H15V54H10L8 33L4 41L1 39L5 23Q6 20 8 20Z" />
                <circle cx="16" cy="11" r="9" />
                <path class="collar" d="M10 20H22L16 29Z" />
              </svg>
            </button>
            <div class="zoom">
              <button type="button" aria-label="Zoom in">
                <svg viewBox="0 0 32 32" width="32" height="32"><path d="M0 16H32M16 0V32" /></svg>
              </button>
              <button type="button" aria-label="Zoom out">
                <svg viewBox="0 0 32 32" width="32" height="32"><path d="M0 16H32" /></svg>
              </button>
            </div>
          </div>
          <div class="credits">
            <span>Dữ liệu bản đồ ©2020 Google</span>
            <a href="#">Điều khoản sử dụng</a>
            <a href="#">Báo cáo một lỗi bản đồ</a>
          </div>
        </div>
      </section>
    </main>
  </div>
</template>

<style>
body {
  margin: 0;
  background: #fff;
}
</style>

<style scoped>
.page {
  font: 400 28px/43px Inter, "Liberation Sans", sans-serif;
  color: #101418;
}

.navbar {
  display: flex;
  align-items: center;
  gap: 26px;
  height: 101px;
  padding: 2px 20px 0;
  box-sizing: border-box;
  background: #353a3f;
  border-bottom: 1px solid #2a2e32;
}
.brand {
  margin-right: 16px;
  font-size: 34px;
  color: #fff;
  text-decoration: none;
}
.nav-link {
  color: #999c9f;
  text-decoration: none;
}

.container {
  display: grid;
  grid-template-columns: minmax(0, 631fr) minmax(0, 1319fr);
  gap: 54px;
  align-items: start;
  max-width: 2004px;
  margin: 29px auto;
  padding-right: 4px;
}
.side {
  display: grid;
  gap: 29px;
}
.card {
  overflow: hidden;
  background: #f8f9fb;
  border: 2px solid #d6d8da;
  border-radius: 8px;
}
.card-header {
  margin: 0;
  padding: 23px 36px 20px;
  font-size: 28px;
  font-weight: 400;
  line-height: 43px;
  background: #eff0f2;
  border-bottom: 2px solid #d0d2d4;
}
.card-body {
  padding: 36px;
}
.avatar {
  display: block;
  width: 177px;
  height: 202px;
  margin: 9px auto 0;
  fill: #23262a;
}
.name {
  margin: 0 0 16px;
  font-size: 34px;
  font-weight: 500;
  line-height: 43px;
}
.details {
  margin: 0 0 29px;
}
.note {
  margin: 0 0 29px;
}
.register {
  display: block;
  height: 69px;
  padding: 0 20px;
  font: inherit;
  color: #fff;
  background: #2e7cf6;
  border: 2px solid #1a73f8;
  border-radius: 7px;
}

.map {
  position: relative;
  height: 1083px;
  font-family: Roboto, sans-serif;
  background: #f5f5f5;
}
.map-canvas {
  display: block;
  width: 100%;
  height: 100%;
}
.light { fill: #d4ebd2; }
.park { fill: #cde7cb; }
.dark { fill: #bde0bb; }
.gray { fill: #e2e2e1; }
.water { fill: #b2d9fb; }
.isle { fill: #f5f5f5; }
.white-road,
.minor-road,
.major-edge,
.major-fill,
.wide-edge,
.wide-fill,
.dashed,
.ferry {
  fill: none;
  stroke-linejoin: round;
}
.white-road { stroke: #fff; stroke-width: 5px; }
.minor-road { stroke: #f3d07c; stroke-width: 5px; }
.major-edge { stroke: #f0ca6c; stroke-width: 12px; }
.major-fill { stroke: #fde9ac; stroke-width: 5px; }
.wide-edge { stroke: #f3cf74; stroke-width: 18px; }
.wide-fill { stroke: #fde6a2; stroke-width: 13px; }
.dashed { stroke: #8b8f93; stroke-width: 3px; stroke-dasharray: 8 6; }
.ferry { stroke: #8aa9e4; stroke-width: 4px; stroke-dasharray: 20 10; }

.shields rect {
  fill: #769f4f;
  stroke: #66922f;
  stroke-width: 1px;
}
.shields text,
.motorways text {
  font-size: 16px;
  font-weight: 700;
  text-anchor: middle;
  fill: #fff;
}
.motorways path { fill: #769f4f; }
.motorways text { fill: #fbd04b; }

.dots circle {
  fill: #fff;
  stroke: #555a60;
  stroke-width: 2px;
}
.city-dots circle {
  fill: #fff;
  stroke: #202328;
  stroke-width: 2px;
}
.place {
  stroke: #fff;
  stroke-width: 5px;
  stroke-linejoin: round;
  paint-order: stroke;
}
.town { font-size: 20px; fill: #54585d; }
.city { font-size: 23px; fill: #26292d; }
.capital { font-size: 28px; font-weight: 500; fill: #202327; }
.reserve { font-size: 25px; fill: #1b7a2b; stroke: #eef7ee; }

.marker path {
  fill: #d9503f;
  stroke: #fff;
  stroke-width: 1px;
}
.marker circle { fill: #751c17; }

.logo {
  font: 500 33px Inter, sans-serif;
  stroke: #e1effb;
  stroke-width: 6px;
  stroke-linejoin: round;
  paint-order: stroke;
}
.blue { fill: #4a86ec; }
.red { fill: #e04a3f; }
.yellow { fill: #f3bb2e; }
.green { fill: #4ba45b; }

.map-types {
  position: absolute;
  top: 18px;
  left: 19px;
  display: flex;
  height: 72px;
  border-radius: 4px;
  box-shadow: 0 1px 7px rgba(0, 0, 0, 0.24);
}
.map-types button {
  padding: 0 31px;
  font: 400 32px Roboto, sans-serif;
  color: #565656;
  background: #fff;
  border: 0;
  border-radius: 0 4px 4px 0;
}
.map-types .active {
  font-weight: 500;
  color: #000;
  border-right: 2px solid #ececec;
  border-radius: 4px 0 0 4px;
}

.tool,
.zoom {
  display: flex;
  align-items: center;
  justify-content: center;
  width: 72px;
  padding: 0;
  background: #fff;
  border: 0;
  border-radius: 4px;
  box-shadow: 0 1px 7px rgba(0, 0, 0, 0.24);
}
.tool {
  height: 72px;
}
.fullscreen {
  position: absolute;
  top: 18px;
  right: 19px;
}
.fullscreen path,
.zoom path {
  fill: none;
  stroke: #666;
  stroke-width: 5px;
}
.zoom path {
  stroke-width: 7px;
}
.map-tools {
  position: absolute;
  right: 19px;
  bottom: 43px;
  display: grid;
  gap: 58px;
}
.pegman path,
.pegman circle {
  fill: #f4bc4b;
  stroke: #6b665c;
  stroke-width: 1px;
}
.pegman .collar {
  fill: #dd8639;
  stroke: none;
}
.zoom {
  flex-direction: column;
}
.zoom button {
  display: flex;
  align-items: center;
  justify-content: center;
  width: 54px;
  height: 73px;
  padding: 0;
  background: none;
  border: 0;
}
.zoom button + button {
  border-top: 1px solid #e3e3e3;
}
.credits {
  position: absolute;
  right: 0;
  bottom: 0;
  display: flex;
  gap: 1px;
  font-size: 18px;
  line-height: 25px;
}
.credits span,
.credits a {
  padding: 0 10px;
  color: #303336;
  text-decoration: none;
  white-space: nowrap;
  background: rgba(245, 245, 245, 0.7);
}
.credits a:last-child {
  padding-right: 12px;
}
</style>
